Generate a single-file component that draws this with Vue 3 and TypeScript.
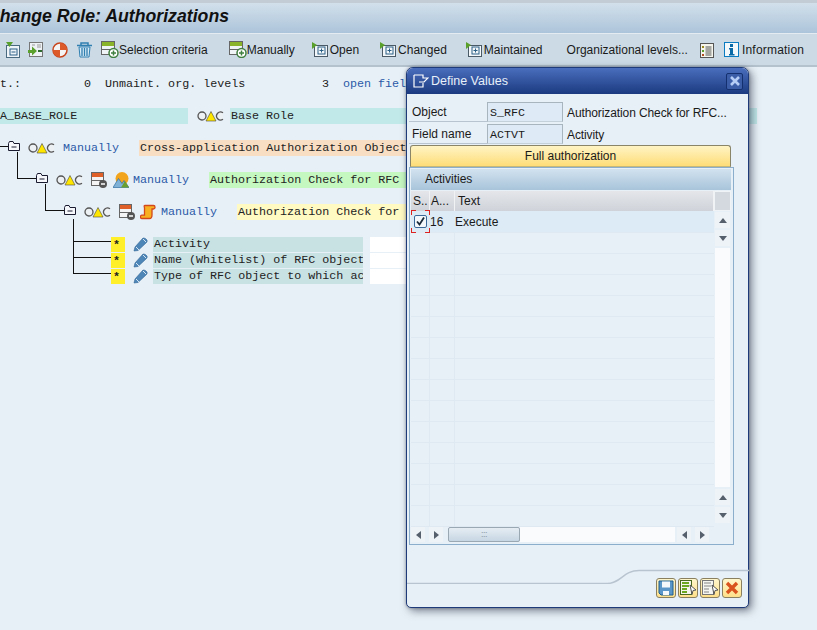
<script setup lang="ts">
const emptyRows: number[] = Array.from({ length: 14 }, (_, i) => i)
</script>

<template>
  <div class="page">
    <header class="titlebar"><h1>Change Role: Authorizations</h1></header>

    <nav class="toolbar">
      <span class="tb t1"><svg width="16" height="16" viewBox="0 0 16 16"><rect x="1.500" y="3.500" width="13" height="12" fill="#eef4f8" stroke="#4a6a80"/><path d="M1 0h7L4.500 5z" fill="#5aa02c"/><rect x="5" y="7" width="7" height="6" fill="none" stroke="#2a5f86"/><path d="M6.500 10h4" stroke="#2a5f86"/></svg></span>
      <span class="tb t2"><svg width="16" height="16" viewBox="0 0 16 16"><rect x="1.500" y="0.500" width="13" height="14" fill="#eef2f4" stroke="#777"/><path d="M0 8h4V4.500l5 4.500-5 4.500V11H0z" fill="#5aa02c"/><path d="M10 9h4" stroke="#2f6b2f" stroke-width="2"/><path d="M4 3h3M9 3h4M9 5h4" stroke="#999"/></svg></span>
      <span class="tb t3"><svg width="16" height="16" viewBox="0 0 16 16"><circle cx="8" cy="8" r="7" fill="#f4f4f4" stroke="#c8451c" stroke-width="1.500"/><path d="M8 1a7 7 0 0 1 7 7H8zM8 8H1a7 7 0 0 0 7 7z" fill="#dc5a2a"/></svg></span>
      <span class="tb t4"><svg width="17" height="16" viewBox="0 0 17 16"><path d="M1 3.500h15M5 3V1h7v2" fill="none" stroke="#2f7fb0" stroke-width="1.500"/><path d="M3 5h11l-1 10H4z" fill="#d8ebf6" stroke="#2f7fb0"/><path d="M6 6v8M8.500 6v8M11 6v8" stroke="#2f7fb0" stroke-width="1.300"/></svg></span>
      <span class="tb t5"><svg width="18" height="17" viewBox="0 0 18 17"><rect x="0.500" y="0.500" width="13" height="13" fill="#f1f4f6" stroke="#666"/><rect x="1" y="1" width="12" height="4" fill="#8ab52a"/><path d="M1 8.500h12" stroke="#666"/><circle cx="12.500" cy="12" r="4.500" fill="#fff" stroke="#3f7f3f" stroke-width="1.500"/><path d="M10 12h5M12.500 9.500v5" stroke="#3f7f3f" stroke-width="1.500"/></svg><b>Selection criteria</b></span>
      <span class="tb t6"><svg width="18" height="17" viewBox="0 0 18 17"><rect x="0.500" y="0.500" width="13" height="13" fill="#f1f4f6" stroke="#666"/><rect x="1" y="1" width="12" height="4" fill="#8ab52a"/><path d="M1 8.500h12" stroke="#666"/><circle cx="12.500" cy="12" r="4.500" fill="#fff" stroke="#3f7f3f" stroke-width="1.500"/><path d="M10 12h5M12.500 9.500v5" stroke="#3f7f3f" stroke-width="1.500"/></svg><b>Manually</b></span>
      <span class="tb t7"><svg width="17" height="16" viewBox="0 0 17 16"><rect x="2.500" y="3.500" width="13" height="11" fill="#f3f7f9" stroke="#4a5a66"/><path d="M0 0l5 3-5 4z" fill="#5aa02c"/><rect x="6" y="5" width="7" height="7" fill="none" stroke="#2a5f86"/><path d="M7.500 8.500h4M9.500 6.500v4" stroke="#2a5f86"/></svg><b>Open</b></span>
      <span class="tb t8"><svg width="17" height="16" viewBox="0 0 17 16"><rect x="2.500" y="3.500" width="13" height="11" fill="#f3f7f9" stroke="#4a5a66"/><path d="M0 0l5 3-5 4z" fill="#5aa02c"/><rect x="6" y="5" width="7" height="7" fill="none" stroke="#2a5f86"/><path d="M7.500 8.500h4M9.500 6.500v4" stroke="#2a5f86"/></svg><b>Changed</b></span>
      <span class="tb t9"><svg width="17" height="16" viewBox="0 0 17 16"><rect x="2.500" y="3.500" width="13" height="11" fill="#f3f7f9" stroke="#4a5a66"/><path d="M0 0l5 3-5 4z" fill="#5aa02c"/><rect x="6" y="5" width="7" height="7" fill="none" stroke="#2a5f86"/><path d="M7.500 8.500h4M9.500 6.500v4" stroke="#2a5f86"/></svg><b>Maintained</b></span>
      <span class="tb t10"><b>Organizational levels...</b></span>
      <span class="tb t11"><svg width="14" height="16" viewBox="0 0 14 16"><rect x="0.500" y="1.500" width="13" height="14" fill="#f5f5ee" stroke="#555"/><path d="M2 4h2v2H2z" fill="#9a8a20"/><path d="M2 8h2v2H2z" fill="#5aa02c"/><path d="M2 12h2v2H2z" fill="#b04a20"/><path d="M5.500 5h6M5.500 7h6M5.500 9h6M5.500 11h6M5.500 13h6" stroke="#555"/></svg></span>
      <span class="tb t12"><svg width="16" height="15" viewBox="0 0 16 15"><rect x="0.500" y="0.500" width="14" height="14" fill="#f3f8fb" stroke="#0a7bc0"/><rect x="6" y="2" width="3" height="3" fill="#0a6aa8"/><path d="M5 6h4v6h1.500v1.500h-5.500V12H6V7.500H5z" fill="#0a6aa8"/></svg><b>Information</b></span>
    </nav>

    <main class="tree">
      <div class="row stats"><span class="m-t">t.:</span><span class="m-zero">0</span><span class="m-un">Unmaint. org. levels</span><span class="m-three">3</span><span class="m-open">open fields</span></div>
      <div class="row spacer"></div>

      <div class="row base">
        <span class="baseid">A_BASE_ROLE</span>
        <svg class="lights l-base" width="28" height="12" viewBox="0 0 28 12"><use href="#lights-g"/></svg>
        <span class="basetext">Base Role</span>
      </div>
      <div class="row spacer"></div>

      <div class="row node n1">
        <svg class="folder" width="12" height="10" viewBox="0 0 12 10"><use href="#folder-g"/></svg>
        <svg class="lights" width="28" height="12" viewBox="0 0 28 12"><use href="#lights-g"/></svg>
        <span class="manual m1">Manually</span>
        <span class="lbl orange">Cross-application Authorization Objects</span>
      </div>
      <div class="row spacer"></div>

      <div class="row node n2">
        <svg class="folder" width="12" height="10" viewBox="0 0 12 10"><use href="#folder-g"/></svg>
        <svg class="lights" width="28" height="12" viewBox="0 0 28 12"><use href="#lights-g"/></svg>
        <svg class="formi" width="16" height="16" viewBox="0 0 16 16"><use href="#form-g"/></svg>
        <svg class="pic" width="16" height="16" viewBox="0 0 16 16"><circle cx="9" cy="6.500" r="6.500" fill="#f2a51c"/><path d="M0 15.500l5.500-9 3.500 5 2-3 5 7z" fill="#7fb0d6" stroke="#2f6fa0" stroke-width=".7"/><path d="M8 15.500l4-6.500 4 6.500z" fill="#6aa030"/></svg>
        <span class="manual m2">Manually</span>
        <span class="lbl green">Authorization Check for RFC Access</span>
      </div>
      <div class="row spacer"></div>

      <div class="row node n3">
        <svg class="folder" width="12" height="10" viewBox="0 0 12 10"><use href="#folder-g"/></svg>
        <svg class="lights" width="28" height="12" viewBox="0 0 28 12"><use href="#lights-g"/></svg>
        <svg class="formi" width="16" height="16" viewBox="0 0 16 16"><use href="#form-g"/></svg>
        <svg class="scroll" width="16" height="16" viewBox="0 0 16 16"><path d="M5 1.500h8.500c2 0 2 3.500 0 3.500H12v6c0 2.500-1 3.500-2.500 3.500H2c-2 0-2-3-.2-3.300H4.500V4C4.500 3 3.500 1.500 5 1.500z" fill="#f9b020" stroke="#d2481c" stroke-width="1.300"/></svg>
        <span class="manual m2">Manually</span>
        <span class="lbl yellow">Authorization Check for RFC Access</span>
      </div>
      <div class="row spacer"></div>

      <div class="row field first">
        <span class="star">*</span>
        <svg class="pencil" width="15" height="15" viewBox="0 0 15 15"><use href="#pencil-g"/></svg>
        <span class="ftext">Activity</span><span class="fval"></span>
      </div>
      <div class="row field">
        <span class="star">*</span>
        <svg class="pencil" width="15" height="15" viewBox="0 0 15 15"><use href="#pencil-g"/></svg>
        <span class="ftext">Name (Whitelist) of RFC object</span><span class="fval"></span>
      </div>
      <div class="row field">
        <span class="star">*</span>
        <svg class="pencil" width="15" height="15" viewBox="0 0 15 15"><use href="#pencil-g"/></svg>
        <span class="ftext">Type of RFC object to which ac</span><span class="fval"></span>
      </div>
    </main>

    <svg class="defs" width="0" height="0">
      <defs>
        <g id="lights-g">
          <circle cx="5" cy="6" r="4" fill="#eef1f4" stroke="#555" stroke-width="1.300"/>
          <path d="M26 2.800A4 4 0 1 0 26 9.200" fill="#eef1f4" stroke="#555" stroke-width="1.300"/>
          <path d="M14 1.500l5 9.500H9z" fill="#ffe600" stroke="#444" stroke-width=".6"/>
        </g>
        <g id="folder-g">
          <path d="M.5 2.500V9.500h11V2.500H6L5 .5H1.500z" fill="#f5f7fa" stroke="#1a1a30"/>
          <path d="M3.500 6h5" stroke="#1a1a30"/>
        </g>
        <g id="form-g">
          <rect x=".5" y=".5" width="12" height="13" fill="#f4f4f4" stroke="#666"/>
          <rect x="1" y="1" width="11" height="4" fill="#e0602a"/>
          <path d="M1 8.500h11" stroke="#666"/>
          <circle cx="12" cy="12" r="4" fill="#555"/>
          <path d="M10 12h4" stroke="#fff" stroke-width="1.500"/>
        </g>
        <g id="pencil-g">
          <path d="M1 14l1-4 8-9q2-.5 4 2q.5 1.500-.5 2.500l-8.500 8z" fill="#4f86b8" stroke="#2f6496" stroke-width=".6"/>
          <path d="M3 10l3 3M10 2l3 3" stroke="#d6e6f2"/>
        </g>
      </defs>
    </svg>

    <section class="modal">
      <div class="m-head">
        <svg width="16" height="14" viewBox="0 0 16 14"><path d="M1 1h9v3h5l-4 4H6M1 1v12h9V9" fill="none" stroke="#fff" stroke-width="1.200"/></svg>
        <span class="m-title">Define Values</span>
        <span class="m-close"><svg width="10" height="10" viewBox="0 0 10 10"><path d="M1 1l8 8M9 1l-8 8" stroke="#b5cdf5" stroke-width="2.600"/></svg></span>
      </div>

      <div class="m-body">
        <div class="formrow"><span class="flabel">Object</span><span class="finput">S_RFC</span><span class="fdesc">Authorization Check for RFC...</span></div>
        <div class="formrow"><span class="flabel">Field name</span><span class="finput">ACTVT</span><span class="fdesc">Activity</span></div>
        <button class="fullbtn">Full authorization</button>

        <div class="tablebox">
          <div class="t-title">Activities</div>
          <div class="t-main">
            <div class="t-grid">
              <div class="t-head">
                <span class="c1">S..</span><span class="c2">A...</span><span class="c3">Text</span>
              </div>
              <div class="t-row sel">
                <span class="c1 checkcell">
                  <span class="checkbox"><svg width="11" height="11" viewBox="0 0 11 11"><path d="M2 5.500l2.500 3L9 1.500" fill="none" stroke="#1a2a3a" stroke-width="1.800"/></svg></span>
                </span>
                <span class="c2">16</span><span class="c3">Execute</span>
              </div>
              <div v-for="r in emptyRows" :key="r" class="t-row">
                <span class="c1"></span><span class="c2"></span><span class="c3"></span>
              </div>
            </div>
            <div class="vscroll">
              <div class="corner"></div>
              <span class="sbtn"><i class="ar up"></i></span>
              <span class="sbtn"><i class="ar down"></i></span>
              <span class="strack"></span>
              <span class="sbtn"><i class="ar up"></i></span>
              <span class="sbtn"><i class="ar down"></i></span>
            </div>
          </div>
          <div class="hscroll">
            <span class="sbtn h"><i class="ar left"></i></span>
            <span class="sbtn h"><i class="ar right"></i></span>
            <span class="thumb"><em>:::</em></span>
            <span class="htrack"></span>
            <span class="sbtn h"><i class="ar left"></i></span>
            <span class="sbtn h"><i class="ar right"></i></span>
          </div>
        </div>
      </div>

      <footer class="m-foot">
        <svg class="curve" width="342" height="16" viewBox="0 0 342 16"><path d="M0 15.500H200C214 15.500 216 2.500 232 2.500H342" fill="none" stroke="#b8c4d0" stroke-width="1.500"/></svg>
        <div class="actions">
          <span class="act"><svg width="16" height="16" viewBox="0 0 16 16"><path d="M1 1h14v14H3l-2-2z" fill="#5a97c8" stroke="#1f5f8f"/><rect x="4" y="1.500" width="8" height="6" fill="#f4f8fb"/><rect x="5" y="11" width="6" height="4" fill="#f4f8fb"/></svg></span>
          <span class="act"><svg width="17" height="16" viewBox="0 0 17 16"><rect x=".5" y=".5" width="11" height="14" fill="#f5f5ee" stroke="#4a6a20"/><path d="M2 3h7M2 6h7M2 9h5M2 12h5" stroke="#6aa820" stroke-width="2"/><path d="M10 5l6 5-3 .5-1 4z" fill="#fff" stroke="#555"/></svg></span>
          <span class="act"><svg width="17" height="16" viewBox="0 0 17 16"><rect x=".5" y=".5" width="11" height="14" fill="#f5f5f2" stroke="#777"/><path d="M2 3h7M2 6h7M2 9h5M2 12h5" stroke="#aaa" stroke-width="1.500"/><path d="M10 5l6 5-3 .5-1 4z" fill="#fff" stroke="#555"/></svg></span>
          <span class="act"><svg width="14" height="14" viewBox="0 0 14 14"><path d="M2 2l10 10M12 2L2 12" stroke="#d9531e" stroke-width="3.400"/></svg></span>
        </div>
      </footer>
    </section>
  </div>
</template>

<style>
html, body { margin: 0; padding: 0; }
</style>

<style scoped>
.page {
  position: relative;
  width: 817px;
  height: 630px;
  overflow: hidden;
  background: #e8f0f7;
  font-family: "Liberation Sans", Arial, sans-serif;
  font-size: 12px;
  color: #1a1a1a;
}
.titlebar {
  box-sizing: border-box;
  height: 34px;
  border-top: 3px solid #c3ccd4;
  background: linear-gradient(#d2e0eb, #acc4da);
  border-bottom: 1px solid #e4ecf2;
  overflow: hidden;
}
.titlebar h1 {
  margin: 0 0 0 -13px;
  font-size: 17.700px;
  line-height: 24px;
  padding-top: 1px;
  font-style: italic;
  font-weight: 700;
  color: #111;
  white-space: nowrap;
}
.toolbar {
  box-sizing: border-box;
  display: flex;
  align-items: center;
  height: 33px;
  background: #ccdae6;
  border-bottom: 2px solid #b4c2ce;
}
.tb { display: flex; align-items: center; flex: none; }
.tb b { font-weight: 400; white-space: nowrap; }
.t1 { margin-left: 5px; }
.t2 { margin-left: 7px; }
.t3 { margin-left: 8px; }
.t4 { margin-left: 8px; }
.t5 { margin-left: 8px; }
.t6 { margin-left: 21px; }
.t7 { margin-left: 17px; }
.t7 b, .t8 b, .t9 b { margin-left: 1px; }
.t8 { margin-left: 21px; }
.t9 { margin-left: 19px; }
.t10 { margin-left: 24px; }
.t11 { margin-left: 12px; }
.t12 { margin-left: 10px; }
.t12 b { margin-left: 2px; letter-spacing: .2px; }

.tree {
  padding-top: 9px;
  font-family: "Liberation Mono", "Courier New", monospace;
  font-size: 11.700px;
  color: #222;
}
.row {
  position: relative;
  display: flex;
  align-items: center;
  height: 16px;
  white-space: nowrap;
}
.m-t { width: 84px; }
.m-zero { width: 21px; }
.m-un { width: 217px; }
.m-three { width: 21px; }
.m-open { color: #2a5aa8; }

.baseid { width: 188px; height: 16px; line-height: 16px; background: #c2e9ea; }
.l-base { margin-left: 9px; }
.basetext { box-sizing: border-box; margin-left: 5px; width: 527px; padding-left: 1px; height: 16px; line-height: 16px; background: #c2e9ea; }

.folder { flex: none; margin-top: -4px; }
.lights { flex: none; }
.manual { color: #2a5aa8; }
.lbl { height: 16px; line-height: 16px; padding-left: 1px; flex: none; }
.orange { background: #f8dfc4; width: 300px; }
.green { background: #c5f7c0; width: 300px; }
.yellow { background: #fff9c2; width: 300px; }

.n1 { padding-left: 8px; }
.n1 .lights { margin-left: 8px; }
.m1 { margin-left: 7px; width: 76px; }
.n2 { padding-left: 36px; }
.n2 .lights, .n3 .lights { margin-left: 8px; }
.n3 { padding-left: 64px; }
.formi { margin-left: 7px; flex: none; }
.pic { margin-left: 6px; flex: none; }
.scroll { margin-left: 5px; flex: none; }
.m2 { margin-left: 4px; width: 76px; }
.n3 .m2 { margin-left: 5px; }

.n1::before {
  content: "";
  position: absolute;
  left: 0; top: 6px;
  width: 8px; height: 1px;
  background: #111;
}
.n1::after, .n2::after {
  content: "";
  position: absolute;
  top: 12px;
  width: 19px; height: 26px;
  border-left: 1px solid #111;
  border-bottom: 1px solid #111;
}
.n1::after { left: 17px; }
.n2::after { left: 45px; }
.n3::after {
  content: "";
  position: absolute;
  left: 73px; top: 15px;
  width: 1px; height: 55px;
  background: #111;
}

.field { padding-left: 111px; }
.field::before {
  content: "";
  position: absolute;
  left: 73px; top: 5px;
  width: 38px; height: 1px;
  background: #111;
}
.star {
  flex: none;
  width: 14px; height: 15px;
  background: #ffef2a;
  line-height: 17px;
  text-indent: 2px;
  font-weight: 700;
}
.pencil { margin-left: 8px; flex: none; }
.ftext {
  box-sizing: border-box;
  margin-left: 5px;
  width: 210px;
  height: 15px;
  line-height: 15px;
  padding-left: 1px;
  background: #c8e1e2;
  overflow: hidden;
  flex: none;
}
.fval { margin-left: 7px; width: 100px; height: 15px; background: #fff; flex: none; }

.defs { position: absolute; }

.modal {
  position: absolute;
  left: 406px;
  top: 67px;
  box-sizing: border-box;
  width: 343px;
  height: 541px;
  display: flex;
  flex-direction: column;
  background: #e8f0f7;
  border: 1px solid #1f3a78;
  border-radius: 7px 7px 5px 5px;
  box-shadow: 3px 3px 8px rgba(30, 40, 60, .55), 0 0 3px rgba(30, 40, 60, .4);
}
.m-head {
  display: flex;
  align-items: center;
  flex: none;
  height: 26px;
  padding-left: 6px;
  border-radius: 6px 6px 0 0;
  background: linear-gradient(#4a6ebd, #1b3a80);
  color: #e8f0fa;
}
.m-title { margin-left: 2px; font-size: 12.500px; flex: 1; }
.m-close {
  display: flex;
  align-items: center;
  justify-content: center;
  width: 15px; height: 15px;
  margin-right: 5px;
  background: #3b5da8;
  border: 1px solid #15306e;
  border-radius: 2px;
}
.m-body { flex: none; padding: 8px 0 0 2px; }
.formrow {
  display: flex;
  align-items: center;
  height: 20px;
  margin-bottom: 2px;
  margin-right: 10px;
}
.flabel {
  box-sizing: border-box;
  width: 78px;
  height: 20px;
  padding-left: 3px;
  padding-top: 2px;
  line-height: 17px;
  border-bottom: 1px solid #b8c4d0;
}
.finput {
  box-sizing: border-box;
  width: 76px;
  height: 20px;
  line-height: 20px;
  padding-left: 2px;
  background: #deeaf5;
  border: 1px solid #a8b4be;
  border-bottom-color: #c4d0da;
  font-family: "Liberation Mono", monospace;
  font-size: 11.700px;
}
.fdesc { margin: 2px 0 0 4px; white-space: nowrap; letter-spacing: -.1px; }
.fullbtn {
  display: block;
  box-sizing: border-box;
  width: 321px;
  height: 22px;
  margin: -1px 0 0 1px;
  padding: 0;
  font: inherit;
  color: inherit;
  background: linear-gradient(#fff4c4, #fedd78);
  border: 1px solid #8a8468;
  border-bottom-color: #c8b878;
  border-radius: 3px 3px 0 0;
}
.tablebox {
  box-sizing: border-box;
  width: 325px;
  height: 378px;
  padding: 1px;
  border: 1px solid #8aaecc;
}
.t-title {
  height: 21px;
  line-height: 21px;
  margin-right: 1px;
  padding-left: 14px;
  background: linear-gradient(#d2e2ef, #a8c4da);
}
.t-main { display: flex; margin-top: 1px; }
.t-grid { width: 303px; flex: none; }
.t-head {
  display: flex;
  height: 20px;
  line-height: 20px;
  background: linear-gradient(#e4e6ea, #cfd3d9);
}
.t-head span { border-right: 1px solid #f0f2f4; }
.t-row {
  display: flex;
  box-sizing: border-box;
  height: 21px;
  line-height: 22px;
  border-bottom: 1px solid #dfe9f2;
}
.t-row.sel { background: #dcebf5; height: 22px; }
.t-row span { border-right: 1px solid #dfe9f2; }
.sel .c1, .sel .c2 { border-right-color: transparent !important; }
.c1 { box-sizing: border-box; width: 19px; padding-left: 2px; flex: none; }
.c2 { box-sizing: border-box; width: 25px; padding-left: 1px; flex: none; }
.t-row .c2 { padding-left: 0; }
.c3 { padding-left: 3px; flex: 1; }
.t-row .c3 { border-right: 0; padding-left: 0; }
.checkcell {
  position: relative;
  padding: 0;
  display: flex;
  align-items: center;
  justify-content: center;
}
.checkcell::before {
  content: "";
  position: absolute;
  left: 0; top: -1px;
  width: 19px; height: 23px;
  background:
    linear-gradient(#d22, #d22) 0 0/5px 1px no-repeat,
    linear-gradient(#d22, #d22) 100% 0/5px 1px no-repeat,
    linear-gradient(#d22, #d22) 0 100%/5px 1px no-repeat,
    linear-gradient(#d22, #d22) 100% 100%/5px 1px no-repeat,
    linear-gradient(#d22, #d22) 0 0/1px 5px no-repeat,
    linear-gradient(#d22, #d22) 100% 0/1px 5px no-repeat,
    linear-gradient(#d22, #d22) 0 100%/1px 5px no-repeat,
    linear-gradient(#d22, #d22) 100% 100%/1px 5px no-repeat;
}
.checkbox {
  box-sizing: border-box;
  display: flex;
  align-items: center;
  justify-content: center;
  width: 13px; height: 13px;
  background: #f4f8fb;
  border: 1px solid #3b6a9a !important;
  border-radius: 2px;
}
.vscroll {
  display: flex;
  flex-direction: column;
  align-items: center;
  width: 17px;
  flex: none;
  gap: 2px;
}
.corner {
  box-sizing: border-box;
  width: 17px; height: 20px;
  margin-bottom: -1px;
  background: #d4d9df;
  border: 1px solid #f0f3f6;
}
.sbtn {
  display: flex;
  align-items: center;
  justify-content: center;
  flex: none;
  width: 15px; height: 16px;
  background: #eef3f8;
}
.strack { width: 15px; height: 239px; background: #fafbfc; }
.ar { display: block; width: 0; height: 0; border: 4px solid transparent; }
.up { border-bottom: 5px solid #56606c; border-top: 0; border-left-width: 4.500px; border-right-width: 4.500px; }
.down { border-top: 5px solid #56606c; border-bottom: 0; border-left-width: 4.500px; border-right-width: 4.500px; }
.left { border-right: 5px solid #56606c; border-left: 0; border-top-width: 4.500px; border-bottom-width: 4.500px; }
.right { border-left: 5px solid #56606c; border-right: 0; border-top-width: 4.500px; border-bottom-width: 4.500px; }
.hscroll { display: flex; align-items: flex-start; height: 17px; }
.sbtn.h { width: 14px; height: 15px; }
.sbtn.h + .sbtn.h { margin-left: 4px; }
.thumb {
  box-sizing: border-box;
  display: flex;
  align-items: center;
  justify-content: center;
  width: 72px; height: 15px;
  margin-left: 5px;
  background: linear-gradient(#e6edf3, #c6d6e3);
  border: 1px solid #9aa8b4;
  border-radius: 2px;
  color: #8a98a4;
}
.thumb em { font-style: normal; font-size: 9px; line-height: 9px; letter-spacing: -.500px; }
.htrack { width: 155px; height: 15px; margin-right: 2px; background: #fafbfc; }

.m-foot { position: relative; flex: 1; }
.curve { position: absolute; left: 0; top: 23px; }
.actions {
  position: absolute;
  right: 6px;
  top: 33px;
  display: flex;
  gap: 2px;
}
.act {
  box-sizing: border-box;
  display: flex;
  align-items: center;
  justify-content: center;
  width: 20px; height: 20px;
  background: linear-gradient(#fff6cc, #fee08a);
  border: 1px solid #8a8060;
  border-radius: 3px;
}
</style>
